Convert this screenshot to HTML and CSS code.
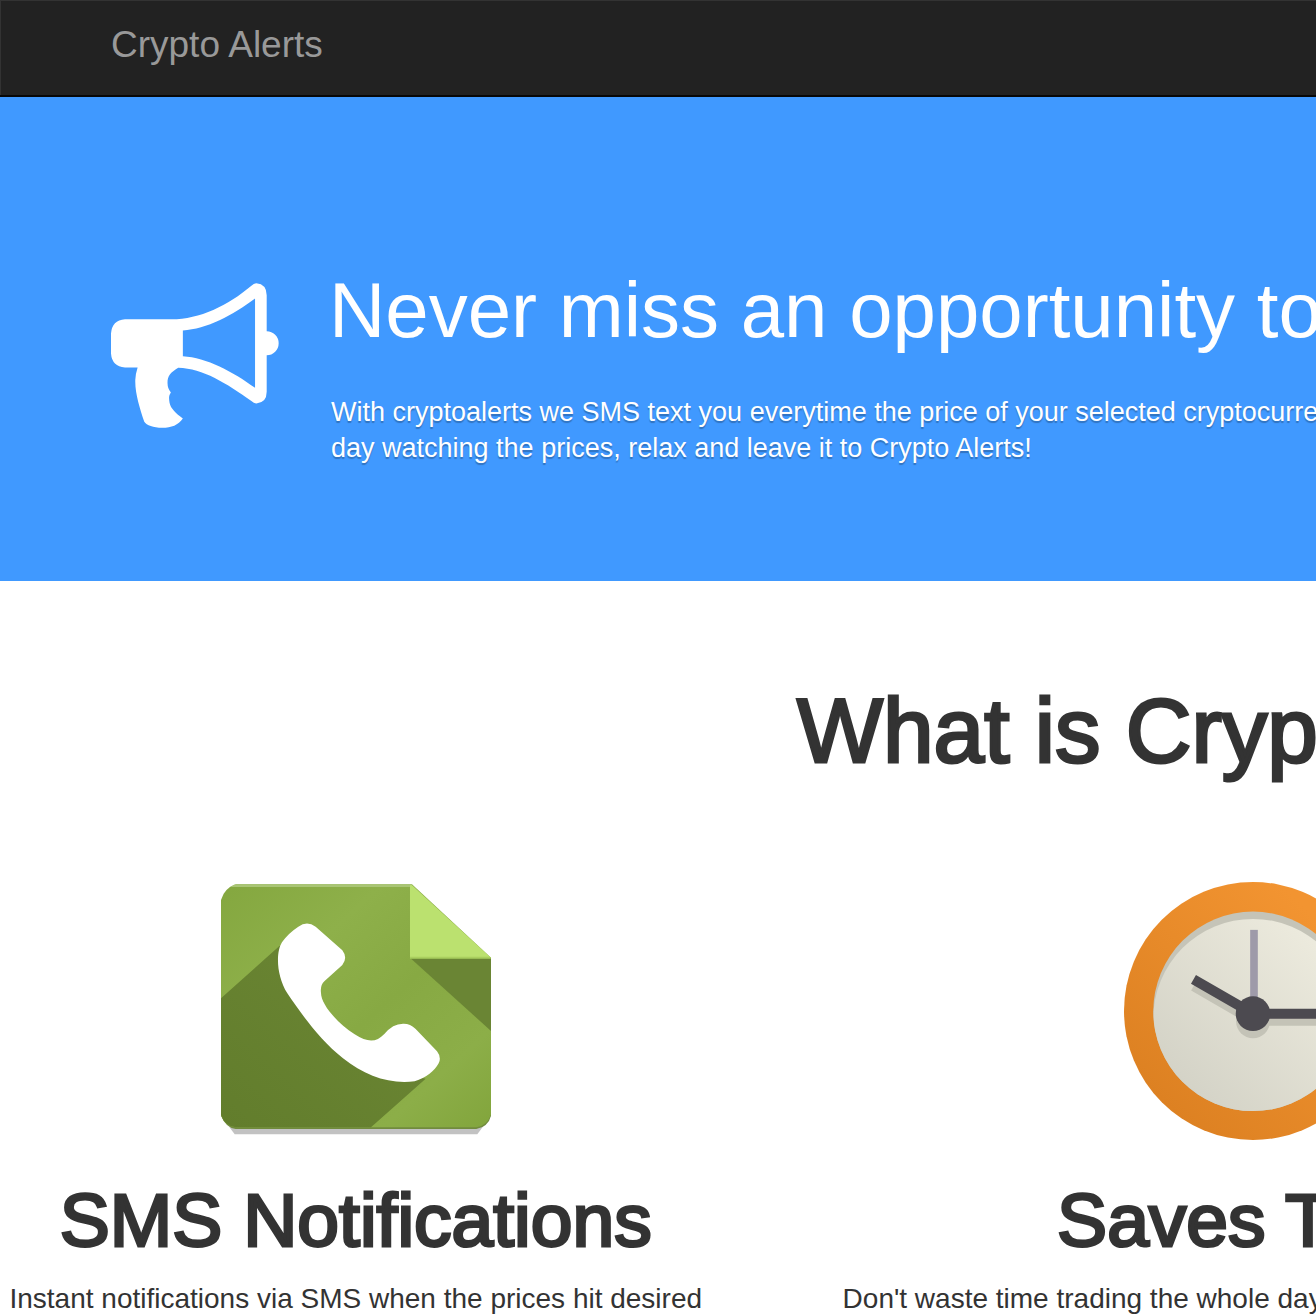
FILE: index.html
```html
<!DOCTYPE html>
<html lang="en">
<head>
  <meta charset="UTF-8" />
  <meta name="viewport" content="width=device-width, initial-scale=1.0" />
  <title>Crypto Alerts</title>
  <link rel="stylesheet" href="styles.css">
</head>
<body>
  <nav class="navbar">
    <a class="brand" href="#">Crypto Alerts</a>
  </nav>

  <header class="hero">
    <svg class="hero-icon" viewBox="63 69 505 434" aria-hidden="true">
      <path fill="#fff" fill-rule="evenodd" d="M105 177H245C330 177 415 135 485 76Q493 69 500 69Q531 72 531 105V213A36 36 0 0 1 531 285V395Q531 428 500 430Q493 430 485 423C410 370 340 325 265 323C240 338 232 350 233 370Q233 385 243 397C236 407 237 415 239 428C242 445 258 460 279 475C265 495 245 503 217 503C190 503 170 496 163 485C150 445 135 400 136 360Q137 340 143 322H105Q66 319 63 280V220Q66 180 105 177ZM279 211C350 207 430 165 496 115V383C430 335 350 292 279 288Z"/>
    </svg>
    <div class="hero-text">
      <h1>Never miss an opportunity to</h1>
      <p>With cryptoalerts we SMS text you everytime the price of your selected cryptocurrency<br>day watching the prices, relax and leave it to Crypto Alerts!</p>
    </div>
  </header>

  <main>
    <h2>What is Crypto Alerts?</h2>
    <div class="features">
      <section class="feature">
        <svg class="phone" viewBox="64 64 810 774" aria-hidden="true">
          <defs>
            <linearGradient id="green" x1="0" y1="0" x2="1" y2="1">
              <stop offset="0" stop-color="#84a73f"/>
              <stop offset=".3" stop-color="#8eb04a"/>
              <stop offset=".55" stop-color="#87a943"/>
              <stop offset=".8" stop-color="#8cae48"/>
              <stop offset="1" stop-color="#82a53c"/>
            </linearGradient>
            <linearGradient id="shade" x1="0" y1="1" x2="1" y2="0">
              <stop offset="0" stop-color="#627d2c"/>
              <stop offset="1" stop-color="#6c8735"/>
            </linearGradient>
          </defs>
          <path fill="#c2c2c2" d="M64 765L105 821H833L874 765Z"/>
          <path fill="#718b3e" d="M64 600V765Q78 800 108 805H830Q866 798 874 765V600Z"/>
          <path fill="url(#green)" d="M64 118Q74 82 110 71H637L874 291V762Q862 795 830 800H108Q74 795 64 762Z"/>
          <path fill="#a9c575" d="M96 76L106 71H637V79H92Z"/>
          <path fill="url(#shade)" d="M64 413L240 255L300 420L450 590L620 640L678 654L514 800H108Q74 795 64 762Z"/>
          <path fill="#6a8534" d="M631 291H874V511Z"/>
          <path fill="#bbe16f" d="M631 74H637L874 291H631Z"/>
          <path fill="#a9cf5e" d="M631 288H871L874 294H631Z"/>
          <path fill="#fff" d="M296 198Q322 179 348 198L428 269Q445 291 428 313L374 362Q361 374 364 397C364 430 410 485 465 521C505 547 530 545 554 520Q580 488 612 489Q632 489 648 505L712 572Q726 590 717 608C705 630 680 652 645 662C570 672 495 645 430 593C360 537 305 460 263 398C230 345 228 275 247 245Q264 219 296 198Z"/>
        </svg>
        <h3>SMS Notifications</h3>
        <p>Instant notifications via SMS when the prices hit desired</p>
      </section>

      <section class="feature">
        <svg class="clock" viewBox="71 63 776 776" aria-hidden="true">
          <defs>
            <linearGradient id="orange" x1="0" y1="1" x2="1" y2="0">
              <stop offset=".15" stop-color="#dd8122"/>
              <stop offset=".8" stop-color="#f29431"/>
            </linearGradient>
            <linearGradient id="face" x1="0" y1="1" x2="1" y2="0">
              <stop offset=".1" stop-color="#d2d1c5"/>
              <stop offset=".9" stop-color="#eeecdf"/>
            </linearGradient>
            <clipPath id="dial"><circle cx="459" cy="452" r="300"/></clipPath>
          </defs>
          <circle cx="459" cy="451" r="388" fill="url(#orange)"/>
          <circle cx="459" cy="452" r="300" fill="#c5c4b8"/>
          <circle cx="459" cy="474" r="300" fill="url(#face)" clip-path="url(#dial)"/>
          <g fill="#c4c3b7" stroke="#c4c3b7">
            <path fill="none" stroke-width="28" d="M280 377L459 481H720"/>
            <circle cx="459" cy="482" r="51" stroke="none"/>
          </g>
          <path fill="none" stroke="#9e9aa9" stroke-width="23" d="M462 207V420"/>
          <path fill="none" stroke="#4c4a50" stroke-width="30" d="M280 356L459 459H720"/>
          <circle cx="459" cy="459" r="52" fill="#4c4a50"/>
        </svg>
        <h3>Saves Time</h3>
        <p>Don't waste time trading the whole day watching the market prices</p>
      </section>
    </div>
  </main>
</body>
</html>
```
FILE: styles.css
```css
* {
  margin: 0;
  padding: 0;
  box-sizing: border-box;
}

body {
  font-family: "Liberation Sans", Arial, sans-serif;
  font-size: 28px;
  line-height: 36px;
  color: #333;
  background: #fff;
  overflow-x: hidden;
}

.navbar {
  padding: 25px 111px 30px;
  background: #222;
  border-bottom: 2px solid #080808;
  box-shadow: inset 1px 1px 0 #333;
}
.brand {
  display: block;
  font-size: 37px;
  line-height: 40px;
  color: #999;
  text-decoration: none;
}

.hero {
  display: flex;
  align-items: flex-start;
  gap: 52px;
  padding: 163px 0 115px 111px;
  background: #4099ff;
  color: #fff;
  overflow: hidden;
}
.hero-icon {
  flex: none;
  width: 168px;
  height: 145px;
  margin-top: 23px;
}
.hero-text {
  margin-left: -2px;
  white-space: nowrap;
}
.hero h1 {
  margin-bottom: 34px;
  font-size: 78px;
  font-weight: 400;
  line-height: 100px;
}
.hero p {
  padding-left: 2px;
  font-size: 27px;
  text-shadow: 0 2px 1px rgba(0, 0, 0, 0.25);
}

main {
  padding-top: 100px;
  overflow: hidden;
}

/* medium weight: regular with a thin outline */
h2, h3 {
  font-weight: 400;
  -webkit-text-stroke: 3px #333;
  white-space: nowrap;
}
h2 {
  width: 190%;
  padding-right: 6px;
  font-size: 91px;
  line-height: 100px;
  text-align: center;
}

.features {
  display: grid;
  grid-template-columns: 54% 64%;
  column-gap: 122px;
  padding: 101px 1px 0;
}
.feature {
  display: flex;
  flex-direction: column;
  align-items: center;
  white-space: nowrap;
}
.phone {
  width: 270px;
  height: 258px;
}
.clock {
  width: 258px;
  height: 258px;
}
h3 {
  margin-top: 40px;
  font-size: 75px;
  line-height: 80px;
}
.feature p {
  margin-top: 21px;
}
```
